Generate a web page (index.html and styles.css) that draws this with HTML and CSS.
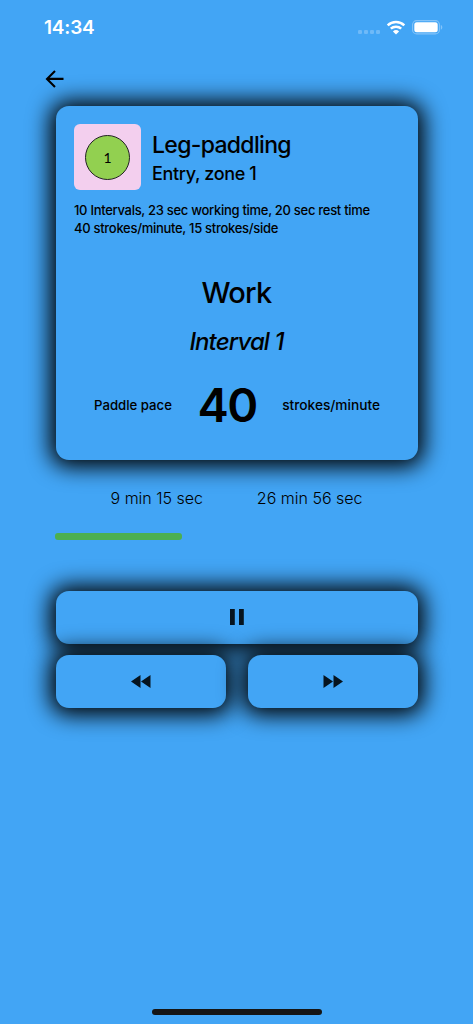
FILE: index.html
```html
<!DOCTYPE html>
<html lang="en">
<head>
  <meta charset="UTF-8">
  <meta name="viewport" content="width=device-width, initial-scale=1">
  <title>Leg-paddling</title>
  <link rel="stylesheet" href="styles.css">
</head>
<body>
  <!-- Status bar -->
  <header class="status-bar">
    <span class="clock">14:34</span>
    <div class="status-icons">
      <svg class="signal" width="22" height="4" viewBox="0 0 22 4">
        <rect x="0" width="4" height="4" rx="1.3"/>
        <rect x="6" width="4" height="4" rx="1.3"/>
        <rect x="12" width="4" height="4" rx="1.3"/>
        <rect x="18" width="4" height="4" rx="1.3"/>
      </svg>
      <svg class="wifi" width="20" height="15" viewBox="0 0 20 15">
        <path d="M1.7 5.4a12 12 0 0 1 16.6 0M4.8 8.7a7.6 7.6 0 0 1 10.4 0" fill="none" stroke="#fff" stroke-width="2.5"/>
        <path d="M10 14.6 6.9 11.5a4.5 4.5 0 0 1 6.2 0z" fill="#fff"/>
      </svg>
      <svg class="battery" width="31" height="15" viewBox="0 0 31 15">
        <rect x="0.6" y="0.6" width="26.8" height="13.3" rx="4" fill="none" stroke="#84c4f9" stroke-width="1.1"/>
        <rect x="2.3" y="2.3" width="23.4" height="10" rx="2.5" fill="#fff"/>
        <path d="M28.8 5c2 .7 2 4 0 4.700z" fill="#84c4f9"/>
      </svg>
    </div>
  </header>

  <nav class="nav">
    <svg width="20" height="20" viewBox="0 0 20 20">
      <path d="M18.500 9.900H2.500M10 1.900 2 9.900l8 8" fill="none" stroke="#000" stroke-width="2.100"/>
    </svg>
  </nav>

  <main class="training">
    <section class="card">
      <div class="card-header">
        <div class="zone-tile"><span class="zone-circle">1</span></div>
        <div class="titles">
          <h1>Leg-paddling</h1>
          <h2>Entry, zone 1</h2>
        </div>
      </div>
      <p class="description">
        10 Intervals, 23 sec working time, 20 sec rest time<br>
        40 strokes/minute, 15 strokes/side
      </p>
      <div class="phase">Work</div>
      <div class="interval">Interval 1</div>
      <div class="pace">
        <span class="pace-label">Paddle pace</span>
        <span class="pace-value">40</span>
        <span class="pace-unit">strokes/minute</span>
      </div>
    </section>

    <div class="times">
      <span>9 min 15 sec</span>
      <span>26 min 56 sec</span>
    </div>
    <div class="progress"><div class="progress-bar" style="width: 35%"></div></div>

    <!-- Player controls -->
    <div class="controls">
      <button class="btn btn-pause" aria-label="Pause">
        <svg width="14" height="16" viewBox="0 0 14 16"><path d="M0 0h4.800v16H0zM9 0h4.800v16H9z"/></svg>
      </button>
      <button class="btn" aria-label="Previous">
        <svg width="20" height="13" viewBox="0 0 20 13"><path d="M9.500 0v13L0 6.500zM19.500 0v13L10 6.500z"/></svg>
      </button>
      <button class="btn" aria-label="Next">
        <svg width="20" height="13" viewBox="0 0 20 13"><path d="M.5 0v13L10 6.500zM10.500 0v13L20 6.500z"/></svg>
      </button>
    </div>
  </main>

  <div class="home-indicator"></div>
</body>
</html>
```
FILE: styles.css
```css
* {
  box-sizing: border-box;
}

body {
  margin: 0;
  height: 1024px;
  display: flex;
  flex-direction: column;
  overflow: hidden;
  background: #42a5f5;
  color: #000;
  font-family: 'Inter', sans-serif;
  font-weight: 500;
}

h1, h2, p {
  margin: 0;
  font-weight: 500;
}

svg {
  display: block;
}

/* Status bar */
.status-bar {
  height: 54px;
  padding: 0 30px 0 44px;
  display: flex;
  align-items: center;
  justify-content: space-between;
  color: #fff;
}

.clock {
  padding-top: 1px;
  font-size: 19px;
  font-weight: 600;
  line-height: 24px;
  letter-spacing: -0.2px;
}

.status-icons {
  display: flex;
  align-items: center;
}

.signal {
  margin: 10px 6px 0 0;
  fill: #6fbaf8;
}

.wifi {
  margin-right: 6px;
}

.nav {
  height: 51.5px;
  padding: 15px 0 0 45px;
}

.training {
  padding: 0 55.5px;
}

/* Workout card */
.card {
  height: 354.5px;
  padding: 18.5px;
  border-radius: 13px;
  background: #42a5f5;
  box-shadow: 0 1px 22px 6px #000;
}

.card-header {
  display: flex;
  gap: 11px;
}

.zone-tile {
  width: 67px;
  height: 66px;
  border-radius: 6px;
  background: #f3cfee;
  display: flex;
  align-items: center;
  justify-content: center;
}

.zone-circle {
  width: 45px;
  height: 45px;
  border: 1px solid #222;
  border-radius: 50%;
  background: #92d050;
  font-family: 'Lato', sans-serif;
  font-size: 14px;
  font-weight: 400;
  line-height: 44px;
  text-align: center;
}

.titles {
  padding-top: 6px;
}

h1 {
  font-size: 23px;
  line-height: 30px;
  letter-spacing: -0.68px;
}

h2 {
  font-size: 18px;
  line-height: 27px;
  letter-spacing: -0.35px;
}

.description {
  margin-top: 11px;
  font-size: 13px;
  line-height: 18px;
  letter-spacing: -0.29px;
  white-space: nowrap;
}

.phase {
  margin-top: 38px;
  font-size: 29px;
  line-height: 36px;
  letter-spacing: -0.7px;
  text-align: center;
}

.interval {
  margin-top: 16px;
  font-size: 24px;
  font-style: italic;
  line-height: 30px;
  letter-spacing: -0.9px;
  text-align: center;
}

.pace {
  margin-top: 20px;
  height: 56px;
  padding: 0 19px 0 20px;
  display: flex;
  align-items: center;
  justify-content: space-between;
}

.pace-label {
  font-size: 13.2px;
}

.pace-unit {
  font-size: 13.7px;
}

.pace-value {
  font-size: 47px;
  font-weight: 600;
  line-height: 56px;
  letter-spacing: -1.5px;
}

/* Time and progress */
.times {
  margin-top: 27px;
  padding: 0 55px;
  display: flex;
  justify-content: space-between;
  font-size: 16px;
  font-weight: 300;
  line-height: 22px;
}

.progress {
  margin: 24px 0 0 -0.5px;
  height: 7px;
}

.progress-bar {
  height: 7px;
  border-radius: 3px;
  background: #4caf50;
}

/* Buttons */
.controls {
  margin-top: 50.5px;
  display: grid;
  grid-template-columns: 1fr 1fr;
  gap: 11px 22px;
}

.btn {
  height: 53px;
  padding: 0;
  border: none;
  border-radius: 13px;
  background: #42a5f5;
  box-shadow: 0 1px 22px 6px #000;
  display: flex;
  align-items: center;
  justify-content: center;
}

.btn svg {
  fill: #06141f;
}

.btn-pause {
  grid-column: span 2;
}

.home-indicator {
  width: 170px;
  height: 6px;
  margin: auto auto 9px;
  border-radius: 3px;
  background: #151515;
}
```
